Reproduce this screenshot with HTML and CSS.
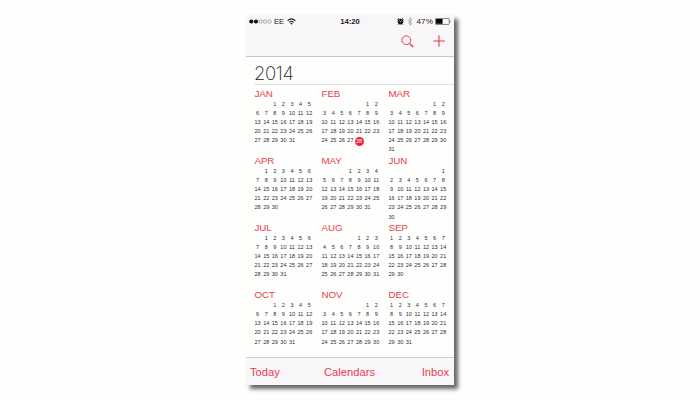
FILE: index.html
```
<!DOCTYPE html>
<html lang="en">
<head>
<meta charset="utf-8">
<title>Calendar 2014</title>
<link rel="stylesheet" href="styles.css">
</head>
<body>
<main class="phone">
  <header class="top">
    <div class="status">
      <div class="carrier">
        <svg class="signal" viewBox="0 0 23 5"><g fill="#111"><circle cx="2.3" cy="2.5" r="2.1"/><circle cx="7" cy="2.5" r="2.1"/></g><g fill="none" stroke="#777" stroke-width=".6"><circle cx="11.6" cy="2.5" r="1.7"/><circle cx="16.1" cy="2.5" r="1.7"/><circle cx="20.6" cy="2.5" r="1.7"/></g></svg>
        <span>EE</span>
        <svg class="wifi" viewBox="0 0 9 7"><g fill="none" stroke="#222" stroke-width="1.1"><path d="M.6 2.7Q4.5-.9 8.4 2.7"/><path d="M2.2 4.3Q4.5 2.2 6.8 4.3"/></g><path d="M3.2 5.2Q4.5 4.1 5.8 5.2L4.5 6.7Z" fill="#222"/></svg>
      </div>
      <span class="clock">14:20</span>
      <div class="power">
        <svg class="alarm" viewBox="0 0 7 7"><circle cx="3.5" cy="3.6" r="2.8" fill="#111"/><path d="M.4 1.7L1.8.5M5.2.5L6.6 1.7M1.6 5.8L1 6.6M5.4 5.8L6 6.6" stroke="#111" stroke-width="1"/><path d="M2.2 2.6L3.5 3.8L4.9 2.5" fill="none" stroke="#fff" stroke-width=".7"/></svg>
        <svg class="bluetooth" viewBox="0 0 6 9"><path d="M.8 2.5L5 6.4L3 8.3V.7L5 2.6L.8 6.5" fill="none" stroke="#999" stroke-width=".75"/></svg>
        <span>47%</span>
        <svg class="battery" viewBox="0 0 16 7"><rect x=".4" y=".4" width="13.8" height="6" rx=".8" fill="#fff" stroke="#444" stroke-width=".7"/><rect x="1" y="1" width="6.6" height="4.8" fill="#050505"/><path d="M14.9 2.3Q16 3.4 14.9 4.6Z" fill="#333"/></svg>
      </div>
    </div>
    <nav class="actions">
      <svg class="search" viewBox="0 0 13 13"><g fill="none" stroke="#e63d4b"><circle cx="5.3" cy="5.2" r="4.4" stroke-width=".95"/><path d="M8.5 8.4L12.3 12.1" stroke-width="1.4"/></g></svg>
      <svg class="add" viewBox="0 0 12 12"><path d="M6 .3V11.7M.2 6H11.8" stroke="#e63d4b" stroke-width="1.1"/></svg>
    </nav>
  </header>
  <section class="calendar">
    <h1 class="year">2014</h1>
    <div class="months" id="months"></div>
  </section>
  <footer class="toolbar"><span>Today</span><span>Calendars</span><span>Inbox</span></footer>
</main>
<script src="script.js"></script>
</body>
</html>
```
FILE: styles.css
```
* { box-sizing: border-box; }
body {
  margin: 0;
  height: 400px;
  padding: 15px 0 0 246px;
  overflow: hidden;
  background: #fefefc;
  font-family: "Liberation Sans", Arial, sans-serif;
}
svg { display: block; flex: none; }
.phone {
  width: 208px;
  height: 370px;
  display: flex;
  flex-direction: column;
  background: #fefefd;
  box-shadow: 4px 4px 4px rgba(0, 0, 0, .6);
}
.top {
  height: 42px;
  flex: none;
  background: #f8f6f9;
  border-bottom: 1px solid #c9c7ca;
}
.status {
  height: 13px;
  display: grid;
  grid-template-columns: 1fr auto 1fr;
  align-items: center;
  padding: 0 3px 0 3px;
  font-size: 7.6px;
  line-height: 13px;
  color: #222;
}
.carrier, .power { display: flex; align-items: center; }
.carrier span { margin: 0 3px 0 2px; }
.power { justify-content: flex-end; }
.power span { margin: 0 2px 0 3px; font-size: 8px; letter-spacing: .2px; }
.signal { width: 23px; height: 5px; }
.wifi { width: 9px; height: 7px; }
.clock { font-weight: bold; font-size: 7.7px; }
.alarm { width: 7px; height: 7px; margin-right: 3px; }
.bluetooth { width: 6px; height: 9px; }
.battery { width: 16px; height: 7px; }
.actions {
  height: 28px;
  display: flex;
  justify-content: flex-end;
  align-items: center;
  gap: 19px;
  padding: 0 9.5px 2px 0;
}
.search { width: 13px; height: 13px; }
.add { width: 12px; height: 12px; }
.calendar { flex: 1; min-height: 0; padding-left: 8px; }
.year {
  margin: 0;
  height: 28px;
  border-bottom: 1px solid #e3e3e4;
  font-family: Inter, "Liberation Sans", sans-serif;
  font-size: 18.5px;
  font-weight: 200;
  line-height: 32px;
  letter-spacing: -.4px;
  color: #222;
}
.months {
  display: grid;
  grid-template-columns: repeat(3, 67px);
  grid-auto-rows: 67.1px;
  padding-top: 3px;
}
.name {
  margin: 0;
  height: 11.5px;
  padding-left: .5px;
  font-size: 9.8px;
  font-weight: normal;
  letter-spacing: -.1px;
  line-height: 12px;
  color: #e8404e;
}
.days {
  display: grid;
  grid-template-columns: repeat(7, 8.6px);
  grid-auto-rows: 9.2px;
  margin-left: -.7px;
  font-size: 5.5px;
  line-height: 9.8px;
  text-align: center;
  color: #2c2c38;
}
.today {
  width: 9px;
  height: 9px;
  margin: .3px 0 0 -.2px;
  border-radius: 50%;
  background: #ec2535;
  line-height: 9.2px;
  color: #fff;
}
.toolbar {
  height: 28px;
  flex: none;
  display: grid;
  grid-template-columns: 1fr auto 1fr;
  align-items: center;
  padding: 0 5px 0 4px;
  border-top: 1px solid #d2d0d3;
  background: #f9f6fa;
  font-size: 11.2px;
  color: #e63d4b;
}
.toolbar span:last-child { text-align: right; }
```
FILE: script.js
```
// [name, column of day 1, number of days]
const months = [
  ["JAN", 2, 31], ["FEB", 5, 28], ["MAR", 5, 31],
  ["APR", 1, 30], ["MAY", 3, 31], ["JUN", 6, 30],
  ["JUL", 1, 31], ["AUG", 4, 31], ["SEP", 0, 30],
  ["OCT", 2, 31], ["NOV", 5, 30], ["DEC", 0, 31]
];
document.getElementById("months").innerHTML = months.map(([name, start, count]) => {
  let cells = "<span></span>".repeat(start);
  for (let d = 1; d <= count; d++) {
    cells += name === "FEB" && d === 28 ? `<span class="today">${d}</span>` : `<span>${d}</span>`;
  }
  return `<article><h2 class="name">${name}</h2><div class="days">${cells}</div></article>`;
}).join("");
```
